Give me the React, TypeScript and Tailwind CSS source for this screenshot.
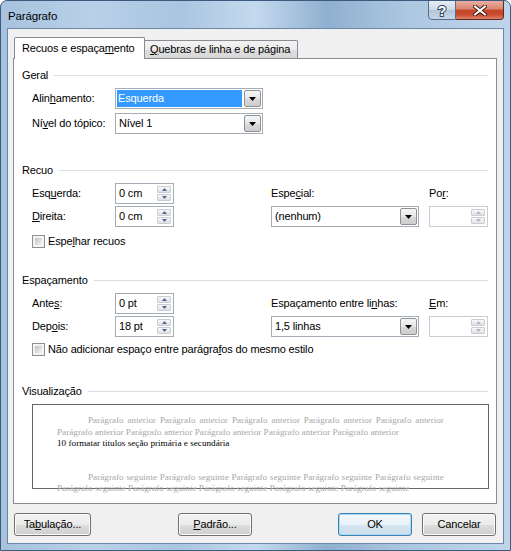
import type { ReactNode } from 'react'

const U = ({ children }: { children: ReactNode }) => (
	<span className="underline decoration-1 underline-offset-[1px]">{children}</span>
)

const Arrow = () => (
	<svg width="7" height="4" viewBox="0 0 7 4">
		<path d="M0 0h7L3.5 4z" fill="#000" />
	</svg>
)

const Combo = ({ value, selected }: { value: string; selected?: boolean }) => (
	<div className="flex h-[21px] w-[148px] border border-[#a5acb5] bg-white p-px">
		<div className="flex flex-1 items-center pr-[2px]">
			{selected ? (
				<div className="flex h-[17px] w-full items-center bg-[#3399ff] pl-px text-white">{value}</div>
			) : (
				<div className="pl-[2px]">{value}</div>
			)}
		</div>
		<div className="flex w-[17px] items-center justify-center rounded-[2px] border border-[#8e9299] bg-[linear-gradient(180deg,#f6f6f6,#e6e6e6_50%,#d9d9d9_51%,#cdcdcd)]">
			<Arrow />
		</div>
	</div>
)

const SpinBtn = ({ up, disabled }: { up?: boolean; disabled?: boolean }) => (
	<div className="flex flex-1 items-center justify-center rounded-[1px] border border-[#c9ccd1] bg-[linear-gradient(180deg,#f8f8f8,#e2e2e2)]">
		<svg width="5" height="3" viewBox="0 0 5 3">
			<path d={up ? 'M0 3h5L2.5 0z' : 'M0 0h5L2.5 3z'} fill={disabled ? '#aab7c8' : '#4a6894'} />
		</svg>
	</div>
)

const Spin = ({ value, disabled }: { value?: string; disabled?: boolean }) => (
	<div
		className={
			disabled
				? 'flex h-[21px] w-[59px] border border-[#c9ced4] bg-white p-px'
				: 'flex h-[21px] w-[59px] border border-[#a5acb5] bg-white p-px'
		}
	>
		<div className="flex flex-1 items-center pl-[2px]">{value}</div>
		<div className="flex w-[15px] flex-col gap-px py-px pr-px">
			<SpinBtn up disabled={disabled} />
			<SpinBtn disabled={disabled} />
		</div>
	</div>
)

const Check = () => (
	<div className="h-[13px] w-[13px] border border-[#8e8f8f] bg-[#f4f4f4] p-[2px]">
		<div className="h-full w-full bg-[linear-gradient(135deg,#bcc0c6,#e6e6e6_70%,#f6f6f6)]" />
	</div>
)

const Header = ({ title }: { title: string }) => (
	<div className="flex h-[14px] items-center pl-[8px] pr-[8px]">
		<span>{title}</span>
		<div className="ml-[6px] h-px flex-1 bg-[#d5dfe5]" />
	</div>
)

const Button = ({ children, w, primary }: { children: ReactNode; w: string; primary?: boolean }) => (
	<div
		className={
			primary
				? `flex h-[23px] items-center justify-center rounded-[3px] border border-[#3c7fb1] bg-[linear-gradient(180deg,#f4f9fc,#e7f1f8_50%,#d7e6f1_51%,#cbdde9)] shadow-[inset_0_0_0_1px_#a6dcf6] ${w}`
				: `flex h-[23px] items-center justify-center rounded-[3px] border border-[#707070] bg-[linear-gradient(180deg,#f2f2f2,#ebebeb_50%,#dddddd_51%,#cfcfcf)] shadow-[inset_0_0_0_1px_#fbfbfb] ${w}`
		}
	>
		{children}
	</div>
)

const gray = 'Parágrafo anterior Parágrafo anterior Parágrafo anterior Parágrafo anterior Parágrafo anterior'
const next = 'Parágrafo seguinte Parágrafo seguinte Parágrafo seguinte Parágrafo seguinte Parágrafo seguinte'

const Justified = ({ text }: { text: string }) => (
	<div className="flex justify-between pl-[31px]">
		{text.split(' ').map((w, i) => (
			<span key={i}>{w}</span>
		))}
	</div>
)

export default function App() {
	return (
		<div className="h-[551px] w-[511px] overflow-hidden rounded-t-[7px] border border-[#3b5a7e] bg-[linear-gradient(90deg,#a7c2dd_0%,#b9d0e8_18%,#aac5e0_35%,#c4d9ee_50%,#8fb0d0_64%,#adc7e1_80%,#bfd5eb_100%)] font-['Liberation_Sans',Arial,sans-serif] text-[11px] tracking-[-0.15px] text-black">
			{/* title bar */}
			<div className="flex h-[27px] items-start justify-between">
				<div className="pl-[7px] pt-[7px] text-[11.5px]">Parágrafo</div>
				<div className="-mt-px mr-[6px] flex">
					<div className="flex h-[20px] w-[28px] items-center justify-center rounded-bl-[4px] border border-[#546f8d] bg-[linear-gradient(180deg,#e6eef6,#cbd9e7_50%,#b3c7db_51%,#c6d6e6)]">
						<svg width="12" height="15" viewBox="0 0 12 15">
							<text
								x="6"
								y="12.5"
								textAnchor="middle"
								fontFamily="Liberation Sans, Arial, sans-serif"
								fontSize="14"
								fontWeight="bold"
								fill="#fff"
								stroke="#2e445c"
								strokeWidth="2"
								paintOrder="stroke"
							>
								?
							</text>
						</svg>
					</div>
					<div className="flex h-[20px] w-[48px] items-center justify-center rounded-br-[4px] border border-l-0 border-[#5b2a22] bg-[linear-gradient(180deg,#eab0a2,#d98470_45%,#c8472b_50%,#c64a2e_75%,#e2826a)]">
						<svg width="14" height="11" viewBox="0 0 14 11">
							<path d="M2 1.5l10 8M12 1.5l-10 8" stroke="#3a1a14" strokeWidth="4" strokeLinecap="round" />
							<path d="M2 1.5l10 8M12 1.5l-10 8" stroke="#fff" strokeWidth="2.2" strokeLinecap="round" />
						</svg>
					</div>
				</div>
			</div>

			{/* client area */}
			<div className="ml-[6px] flex h-[516px] w-[497px] flex-col border border-[#6b88a8] bg-[#f0f0f0]">
				{/* tabs */}
				<div className="mt-[8px] flex h-[21px] items-end pl-[6px]">
					<div className="relative z-10 -mb-px flex h-[22px] w-[131px] items-center rounded-t-[2px] border-x border-t border-[#898c95] bg-white pl-[7px]">
						Recuos e espaça<U>m</U>ento
					</div>
					<div className="flex h-[18px] w-[153px] items-center rounded-tr-[2px] border-r border-t border-[#898c95] bg-[linear-gradient(180deg,#f3f3f3,#ebebeb_50%,#dedede_51%,#d8d8d8)] pl-[5px]">
						<U>Q</U>uebras de linha e de página
					</div>
				</div>

				{/* panel */}
				<div className="ml-[5px] flex h-[446px] w-[484px] flex-col overflow-hidden border border-[#898c95] bg-white">
					<div className="mt-[9px]">
						<Header title="Geral" />
					</div>
					<div className="mt-[6px] flex h-[21px] items-center">
						<div className="w-[101px] pl-[18px]">
							Alin<U>h</U>amento:
						</div>
						<Combo value="Esquerda" selected />
					</div>
					<div className="mt-[4px] flex h-[21px] items-center">
						<div className="w-[101px] pl-[18px]">
							Ní<U>v</U>el do tópico:
						</div>
						<Combo value="Nível 1" />
					</div>

					<div className="mt-[29px]">
						<Header title="Recuo" />
					</div>
					<div className="mt-[6px] flex h-[21px] items-center">
						<div className="flex w-[257px] items-center">
							<div className="w-[101px] pl-[18px]">
								Esq<U>u</U>erda:
							</div>
							<Spin value="0 cm" />
						</div>
						<div className="w-[158px]">
							Espe<U>c</U>ial:
						</div>
						<div>
							Po<U>r</U>:
						</div>
					</div>
					<div className="mt-[2px] flex h-[21px] items-center">
						<div className="flex w-[257px] items-center">
							<div className="w-[101px] pl-[18px]">
								<U>D</U>ireita:
							</div>
							<Spin value="0 cm" />
						</div>
						<div className="w-[158px]">
							<Combo value="(nenhum)" />
						</div>
						<Spin disabled />
					</div>
					<div className="mt-[8px] flex h-[13px] items-center gap-[3px] pl-[18px]">
						<Check />
						<span>
							Espe<U>l</U>har recuos
						</span>
					</div>

					<div className="mt-[25px]">
						<Header title="Espaçamento" />
					</div>
					<div className="mt-[6px] flex h-[21px] items-center">
						<div className="flex w-[257px] items-center">
							<div className="w-[101px] pl-[18px]">
								Ante<U>s</U>:
							</div>
							<Spin value="0 pt" />
						</div>
						<div className="w-[158px]">
							Espaçamento entre li<U>n</U>has:
						</div>
						<div>
							<U>E</U>m:
						</div>
					</div>
					<div className="mt-[2px] flex h-[21px] items-center">
						<div className="flex w-[257px] items-center">
							<div className="w-[101px] pl-[18px]">
								Dep<U>o</U>is:
							</div>
							<Spin value="18 pt" />
						</div>
						<div className="w-[158px]">
							<Combo value="1,5 linhas" />
						</div>
						<Spin disabled />
					</div>
					<div className="mt-[6px] flex h-[13px] items-center gap-[3px] pl-[18px]">
						<Check />
						<span>
							Não adicionar espaço entre parágra<U>f</U>os do mesmo estilo
						</span>
					</div>

					<div className="mt-[28px]">
						<Header title="Visualização" />
					</div>
					<div className="ml-[18px] mt-[6px] h-[85px] w-[457px] shrink-0 border border-[#666666] bg-white">
						<div className="ml-[24px] w-[387px] pt-[10px] font-['Liberation_Serif','Times_New_Roman',serif] text-[9.2px] leading-[11.5px] tracking-normal text-[#a8a8a8]">
							<Justified text={gray} />
							<div className="whitespace-nowrap">{gray}</div>
							<div className="whitespace-nowrap text-black">10 formatar titulos seção primária e secundária</div>
							<div className="mt-[22px]">
								<Justified text={next} />
							</div>
							<div className="whitespace-nowrap">{next}</div>
						</div>
					</div>
				</div>

				{/* buttons */}
				<div className="mt-[9px] flex items-center">
					<div className="ml-[6px]">
						<Button w="w-[77px]">
							Ta<U>b</U>ulação...
						</Button>
					</div>
					<div className="ml-[87px]">
						<Button w="w-[74px]">
							<U>P</U>adrão...
						</Button>
					</div>
					<div className="ml-[86px]">
						<Button w="w-[74px]" primary>
							OK
						</Button>
					</div>
					<div className="ml-[10px]">
						<Button w="w-[74px]">Cancelar</Button>
					</div>
				</div>
			</div>
		</div>
	)
}
